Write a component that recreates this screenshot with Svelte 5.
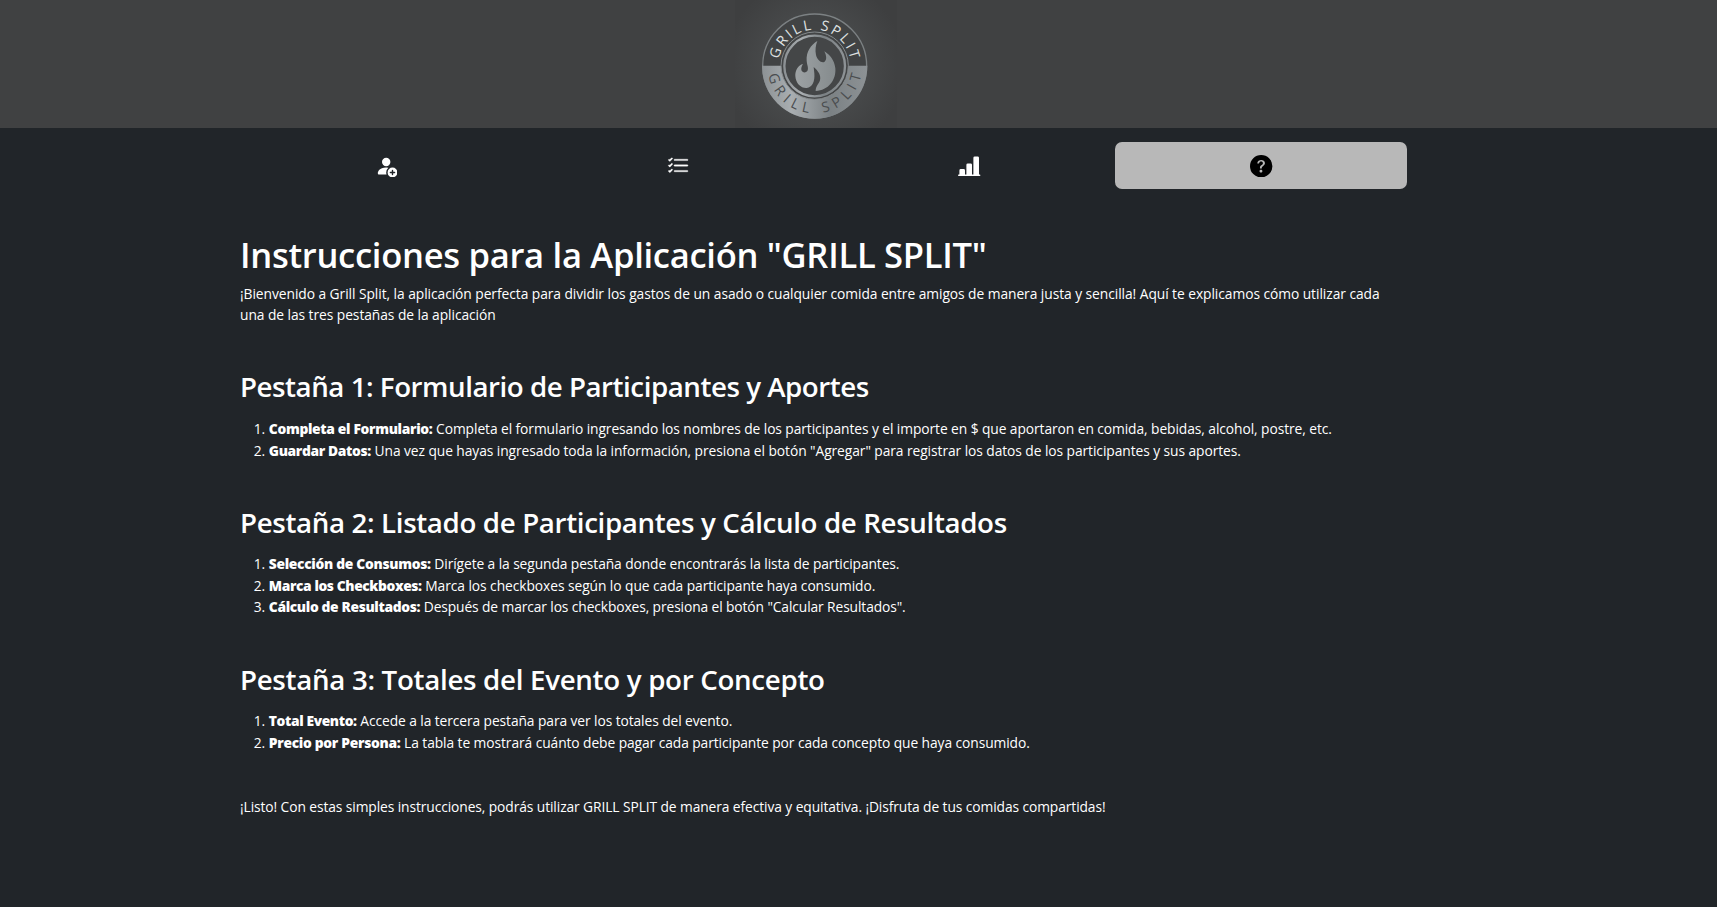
<script>
  const tabs = [
    {
      label: 'Participantes',
      paths: [
        'M12.5 16a3.5 3.5 0 1 0 0-7 3.5 3.5 0 0 0 0 7m.5-5v1h1a.5.5 0 0 1 0 1h-1v1a.5.5 0 0 1-1 0v-1h-1a.5.5 0 0 1 0-1h1v-1a.5.5 0 0 1 1 0m-2-6a3 3 0 1 1-6 0 3 3 0 0 1 6 0',
        'M2 13c0 1 1 1 1 1h5.256A4.5 4.5 0 0 1 8 12.5a4.5 4.5 0 0 1 1.544-3.393Q8.844 9.002 8 9c-5 0-6 3-6 4'
      ]
    },
    {
      label: 'Listado',
      bold: true,
      paths: [
        'M5 11.5a.5.5 0 0 1 .5-.5h9a.5.5 0 0 1 0 1h-9a.5.5 0 0 1-.5-.5m0-4a.5.5 0 0 1 .5-.5h9a.5.5 0 0 1 0 1h-9a.5.5 0 0 1-.5-.5m0-4a.5.5 0 0 1 .5-.5h9a.5.5 0 0 1 0 1h-9a.5.5 0 0 1-.5-.5M3.854 2.146a.5.5 0 0 1 0 .708l-1.5 1.5a.5.5 0 0 1-.708 0l-.5-.5a.5.5 0 1 1 .708-.708L2 3.293l1.146-1.147a.5.5 0 0 1 .708 0m0 4a.5.5 0 0 1 0 .708l-1.5 1.5a.5.5 0 0 1-.708 0l-.5-.5a.5.5 0 1 1 .708-.708L2 7.293l1.146-1.147a.5.5 0 0 1 .708 0m0 4a.5.5 0 0 1 0 .708l-1.5 1.5a.5.5 0 0 1-.708 0l-.5-.5a.5.5 0 0 1 .708-.708l.146.147 1.146-1.147a.5.5 0 0 1 .708 0'
      ]
    },
    {
      label: 'Totales',
      paths: [
        'M11 2a1 1 0 0 1 1-1h2a1 1 0 0 1 1 1v12h.5a.5.5 0 0 1 0 1H.5a.5.5 0 0 1 0-1H1v-3a1 1 0 0 1 1-1h2a1 1 0 0 1 1 1v3h1V7a1 1 0 0 1 1-1h2a1 1 0 0 1 1 1v7h1z'
      ]
    },
    {
      label: 'Ayuda',
      active: true,
      paths: [
        'M16 8A8 8 0 1 1 0 8a8 8 0 0 1 16 0M5.496 6.033h.825c.138 0 .248-.113.266-.25.09-.656.54-1.134 1.342-1.134.686 0 1.314.343 1.314 1.168 0 .635-.374.927-.965 1.371-.673.489-1.206 1.06-1.168 1.987l.003.217a.25.25 0 0 0 .25.246h.811a.25.25 0 0 0 .25-.25v-.105c0-.718.273-.927 1.01-1.486.609-.463 1.244-.977 1.244-2.056 0-1.511-1.276-2.241-2.673-2.241-1.267 0-2.655.59-2.75 2.286a.237.237 0 0 0 .241.247m2.325 6.443c.61 0 1.029-.394 1.029-.927 0-.552-.42-.94-1.029-.94-.584 0-1.009.388-1.009.94 0 .533.425.927 1.01.927z'
      ]
    }
  ];

  // ls: letter-spacing of each run, in px
  const sections = [
    {
      title: 'Pestaña 1: Formulario de Participantes y Aportes',
      ls: -0.46,
      items: [
        { name: 'Completa el Formulario:', nls: -0.32, text: 'Completa el formulario ingresando los nombres de los participantes y el importe en $ que aportaron en comida, bebidas, alcohol, postre, etc.', ls: -0.078 },
        { name: 'Guardar Datos:', nls: -0.35, text: 'Una vez que hayas ingresado toda la información, presiona el botón "Agregar" para registrar los datos de los participantes y sus aportes.', ls: -0.071 }
      ]
    },
    {
      title: 'Pestaña 2: Listado de Participantes y Cálculo de Resultados',
      ls: -0.35,
      items: [
        { name: 'Selección de Consumos:', nls: -0.3, text: 'Dirígete a la segunda pestaña donde encontrarás la lista de participantes.', ls: -0.09 },
        { name: 'Marca los Checkboxes:', nls: -0.4, text: 'Marca los checkboxes según lo que cada participante haya consumido.', ls: -0.065 },
        { name: 'Cálculo de Resultados:', nls: -0.345, text: 'Después de marcar los checkboxes, presiona el botón "Calcular Resultados".', ls: -0.108 }
      ]
    },
    {
      title: 'Pestaña 3: Totales del Evento y por Concepto',
      ls: -0.3,
      items: [
        { name: 'Total Evento:', nls: -0.38, text: 'Accede a la tercera pestaña para ver los totales del evento.', ls: -0.085 },
        { name: 'Precio por Persona:', nls: -0.29, text: 'La tabla te mostrará cuánto debe pagar cada participante por cada concepto que haya consumido.', ls: -0.08 }
      ]
    }
  ];
</script>

<header>
  <svg class="logo" viewBox="60 0 486 384" role="img" aria-label="Grill Split">
    <defs>
      <radialGradient id="glow" gradientUnits="userSpaceOnUse" cx="299" cy="198" r="270">
        <stop offset="0.5" stop-color="#484a4b" />
        <stop offset="1" stop-color="#3e3f40" />
      </radialGradient>
      <linearGradient id="steel" x1="0" y1="0" x2="1" y2="0">
        <stop offset="0" stop-color="#8c9194" />
        <stop offset="0.28" stop-color="#a9aeb1" />
        <stop offset="0.65" stop-color="#7b8184" />
        <stop offset="1" stop-color="#8d9295" />
      </linearGradient>
      <linearGradient id="flame" x1="0" y1="0" x2="1" y2="0">
        <stop offset="0" stop-color="#9da2a4" />
        <stop offset="1" stop-color="#858b8d" />
      </linearGradient>
      <path id="arc-top" d="M190 198 A109 109 0 0 1 408 198" />
      <path id="arc-bottom" d="M157 198 A142 142 0 0 0 441 198" />
    </defs>
    <rect x="60" width="486" height="384" fill="url(#glow)" />
    <circle cx="299" cy="198" r="156" fill="#414344" stroke="#7c8183" stroke-width="4" />
    <path d="M141 197H457A158 159 0 0 1 141 197Z" fill="url(#steel)" />
    <circle cx="299" cy="197" r="101" fill="#434546" stroke="#868b8d" stroke-width="3" />
    <circle cx="299" cy="198" r="91" fill="#444647" stroke="url(#steel)" stroke-width="7" />
    <path
      d="M307 123C288 135 273 155 275 182C276 196 281 201 278 211C275 219 262 220 259 210C258 203 261 197 264 192C250 195 240 212 241 228C242 250 258 265 275 264C292 262 300 245 298 220L296 201C310 213 319 226 315 241C311 253 302 258 302 273C340 272 364 240 361 205C358 180 345 165 328 154C335 168 336 180 328 186C318 190 306 178 303 165C300 150 302 135 307 123Z"
      fill="url(#flame)"
    />
    <text class="word light"><textPath href="#arc-top" startOffset="50%" text-anchor="middle" textLength="302">GRILL SPLIT</textPath></text>
    <text class="word dark"><textPath href="#arc-bottom" startOffset="50%" text-anchor="middle" textLength="392">GRILL SPLIT</textPath></text>
  </svg>
</header>

<main>
  <nav>
    {#each tabs as tab}
      <button class:active={tab.active} class:bold={tab.bold} aria-label={tab.label}>
        <svg viewBox="0 0 16 16" fill="currentColor">
          {#each tab.paths as d}<path {d} />{/each}
        </svg>
      </button>
    {/each}
  </nav>

  <article>
    <h1>Instrucciones para la Aplicación "GRILL SPLIT"</h1>
    <p class="intro">¡Bienvenido a Grill Split, la aplicación perfecta para dividir los gastos de un asado o cualquier comida entre amigos de manera justa y sencilla! Aquí te explicamos cómo utilizar cada una de las tres pestañas de la aplicación</p>

    {#each sections as section}
      <section>
        <h2 style:letter-spacing="{section.ls}px">{section.title}</h2>
        <ol>
          {#each section.items as item}
            <li><strong style:letter-spacing="{item.nls}px">{item.name}</strong> <span style:letter-spacing="{item.ls}px">{item.text}</span></li>
          {/each}
        </ol>
      </section>
    {/each}

    <p class="closing">¡Listo! Con estas simples instrucciones, podrás utilizar GRILL SPLIT de manera efectiva y equitativa. ¡Disfruta de tus comidas compartidas!</p>
  </article>
</main>

<style>
  :global(body) {
    background: #212529;
    color: #fff;
    font-family: 'Open Sans', 'Noto Sans', sans-serif;
    font-size: 13.8px;
    line-height: 21.6px;
  }

  header {
    display: flex;
    height: 128px;
    padding-left: 735px;
    background: #404142;
  }

  .logo {
    width: 162px;
    height: 128px;
  }

  .word {
    font-family: 'Open Sans', sans-serif;
    font-size: 43px;
  }

  .light {
    fill: #dfe1e2;
  }

  .dark {
    fill: #4a4d4f;
  }

  main {
    width: 1167px;
    margin-left: 240px;
    padding-top: 14px;
  }

  nav {
    display: grid;
    grid-template-columns: repeat(4, 1fr);
    height: 47px;
  }

  button {
    display: flex;
    align-items: center;
    justify-content: center;
    padding: 1.4px 0 0 0.6px;
    border: 0;
    border-radius: 7px;
    background: none;
    color: #fff;
  }

  button svg {
    width: 22.4px;
    height: 22.4px;
  }

  .bold svg {
    stroke: currentColor;
    stroke-width: 0.25;
  }

  .active {
    background: #b8b8b8;
    color: #000;
  }

  article {
    padding-top: 44px;
  }

  h1,
  h2,
  p,
  ol {
    margin: 0;
  }

  h1 {
    font-size: 34.6px;
    font-weight: 600;
    line-height: 43.2px;
    letter-spacing: -0.3px;
  }

  .intro {
    padding-top: 6.5px;
    letter-spacing: -0.058px;
  }

  section {
    padding-top: 43.5px;
  }

  h2 {
    font-size: 27.7px;
    font-weight: 600;
    line-height: 34.6px;
  }

  ol {
    padding: 14px 0 0 28.8px;
  }

  strong {
    font-weight: 800;
  }

  .closing {
    padding-top: 43px;
    letter-spacing: -0.093px;
  }
</style>
